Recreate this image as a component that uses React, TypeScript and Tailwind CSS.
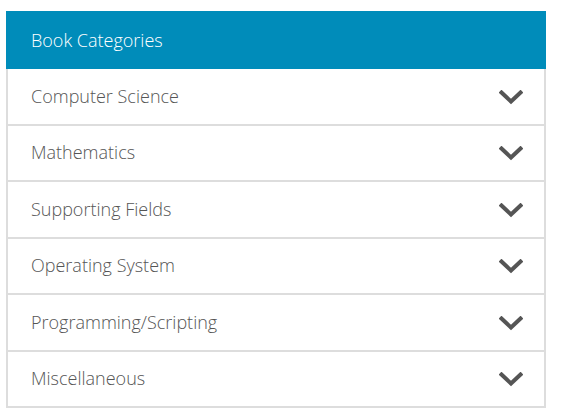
import React from 'react';

const categories = [
  'Computer Science',
  'Mathematics',
  'Supporting Fields',
  'Operating System',
  'Programming/Scripting',
  'Miscellaneous',
];

const Chevron: React.FC = () => (
  <svg width="24" height="15" viewBox="0 0 24 15" className="mt-[2px] text-[#555555]">
    <polyline
      points="2.5,2.5 12,11.5 21.5,2.5"
      fill="none"
      stroke="currentColor"
      strokeWidth="4"
      strokeLinecap="square"
      strokeLinejoin="miter"
    />
  </svg>
);

export default function App() {
  return (
    <div className="min-h-[415px] bg-white pt-[11px] pl-[6px] font-['Open_Sans',sans-serif]">
      <div className="w-[540px]">
        <div className="flex h-[58px] items-center bg-[#008cba] px-[25px] text-[18px] font-light text-white">
          Book Categories
        </div>
        {categories.map((name) => (
          <div
            key={name}
            className="flex h-[56.5px] items-center justify-between border-x-2 border-b-2 border-[#dddddd] pl-[23px] pr-[21px] text-[18px] font-light text-[#555555]"
          >
            <span>{name}</span>
            <Chevron />
          </div>
        ))}
      </div>
    </div>
  );
}
